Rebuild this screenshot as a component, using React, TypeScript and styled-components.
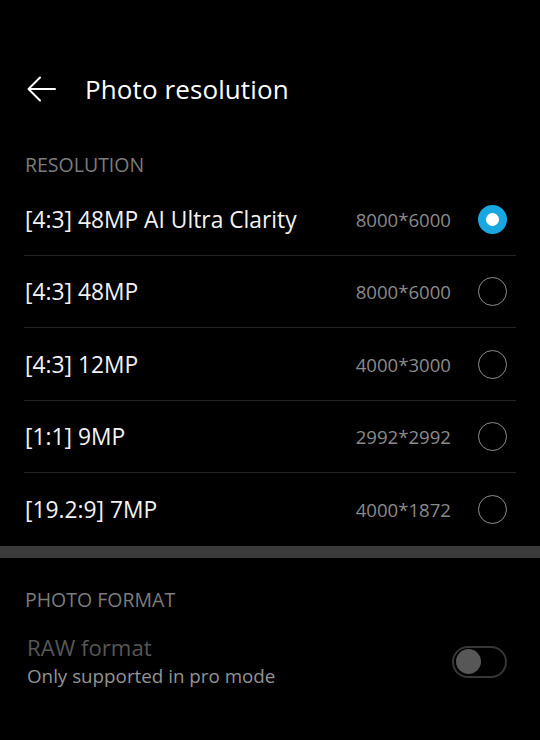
import React, { useState } from "react";
import styled, { createGlobalStyle } from "styled-components";

const GlobalStyle = createGlobalStyle`
  html, body {
    margin: 0;
    padding: 0;
    background: #000;
  }
  body {
    font-family: "Open Sans", "Noto Sans", sans-serif;
    -webkit-font-smoothing: antialiased;
  }
`;

const Page = styled.div`
  width: 540px;
  height: 740px;
  background: #000;
  overflow: hidden;
`;

const Header = styled.div`
  display: flex;
  align-items: center;
  height: 62px;
  margin-top: 58px;
  padding-left: 27px;
  gap: 29px;
`;

const BackButton = styled.button`
  display: flex;
  align-items: center;
  justify-content: center;
  padding: 0;
  border: none;
  background: none;
  width: 29px;
  height: 29px;
  cursor: pointer;
`;

const Title = styled.h1`
  margin: 0;
  font-size: 26px;
  font-weight: 400;
  color: #fff;
  letter-spacing: 0.1px;
`;

const SectionTitle = styled.div<{ $top: number }>`
  margin: ${(p) => p.$top}px 0 0 25px;
  height: 24px;
  line-height: 24px;
  font-size: 19.5px;
  color: #7c7c7c;
`;

const List = styled.div`
  margin: 6.6px 24px 0 24px;
`;

const Row = styled.div<{ $last?: boolean }>`
  display: flex;
  align-items: center;
  box-sizing: border-box;
  height: 72.4px;
  padding: 0 9px 0 1px;
  border-bottom: ${(p) => (p.$last ? "none" : "1px solid #242424")};
  cursor: pointer;
`;

const Label = styled.span`
  flex: 1;
  font-size: 22.8px;
  color: #f2f2f2;
`;

const Value = styled.span`
  font-size: 18.6px;
  color: #8a8a8a;
  margin-right: 27px;
`;

const Radio = styled.span<{ $checked: boolean }>`
  box-sizing: border-box;
  width: 29px;
  height: 29px;
  border-radius: 50%;
  border: ${(p) => (p.$checked ? "8px solid #18a7de" : "1.5px solid #8e8e8e")};
  background: ${(p) => (p.$checked ? "#fff" : "transparent")};
`;

const Divider = styled.div`
  height: 12px;
  background: #3a3a3a;
`;

const ToggleRow = styled.div`
  display: flex;
  align-items: center;
  margin: 22px 33px 0 27px;
`;

const ToggleText = styled.div`
  flex: 1;
  display: flex;
  flex-direction: column;
`;

const ToggleTitle = styled.span`
  font-size: 22.2px;
  line-height: 28px;
  color: #565656;
`;

const ToggleSub = styled.span`
  font-size: 18.8px;
  line-height: 28px;
  color: #949494;
`;

const Switch = styled.span`
  box-sizing: border-box;
  display: flex;
  align-items: center;
  width: 55px;
  height: 32px;
  padding: 0 2px;
  border-radius: 16px;
  border: 2px solid #363636;
`;

const Knob = styled.span`
  width: 25px;
  height: 25px;
  border-radius: 50%;
  background: #575757;
`;

const resolutions = [
  { label: "[4:3] 48MP AI Ultra Clarity", value: "8000*6000" },
  { label: "[4:3] 48MP", value: "8000*6000" },
  { label: "[4:3] 12MP", value: "4000*3000" },
  { label: "[1:1] 9MP", value: "2992*2992" },
  { label: "[19.2:9] 7MP", value: "4000*1872" },
];

export default function App() {
  const [selected, setSelected] = useState(0);

  return (
    <Page>
      <GlobalStyle />
      <Header>
        <BackButton aria-label="Back">
          <svg width="29" height="26" viewBox="0 0 29 26" fill="none">
            <path
              d="M13 1.5 L1.5 13 L13 24.5 M1.5 13 H28"
              stroke="#fff"
              strokeWidth="2"
              strokeLinecap="round"
              strokeLinejoin="round"
            />
          </svg>
        </BackButton>
        <Title>Photo resolution</Title>
      </Header>

      <SectionTitle $top={33}>RESOLUTION</SectionTitle>
      <List>
        {resolutions.map((r, i) => (
          <Row key={i} $last={i === resolutions.length - 1} onClick={() => setSelected(i)}>
            <Label>{r.label}</Label>
            <Value>{r.value}</Value>
            <Radio $checked={selected === i} />
          </Row>
        ))}
      </List>

      <Divider />

      <SectionTitle $top={30}>PHOTO FORMAT</SectionTitle>
      <ToggleRow>
        <ToggleText>
          <ToggleTitle>RAW format</ToggleTitle>
          <ToggleSub>Only supported in pro mode</ToggleSub>
        </ToggleText>
        <Switch>
          <Knob />
        </Switch>
      </ToggleRow>
    </Page>
  );
}
